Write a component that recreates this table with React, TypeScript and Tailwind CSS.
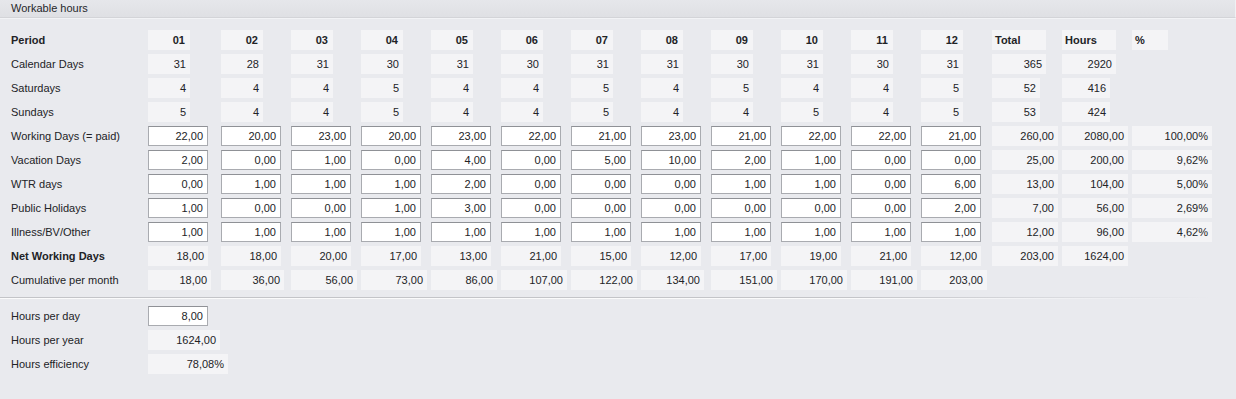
import type { ReactNode } from 'react';

type Cell =
  | { kind: 'head'; text: string; w: number; align?: 'left' | 'right' }
  | { kind: 'ro'; text: string; w: number }
  | { kind: 'input'; text: string; w: number }
  | null;

// width of each slot after the label column (12 months, Total, Hours, %)
const SLOTS = [73, 70, 70, 70, 70, 70, 70, 70, 70, 70, 70, 71, 70, 70, 104];

const fmt = (n: number) => n.toFixed(2).replace('.', ',');

const months = ['01', '02', '03', '04', '05', '06', '07', '08', '09', '10', '11', '12'];
const calendar = [31, 28, 31, 30, 31, 30, 31, 31, 30, 31, 30, 31];
const saturdays = [4, 4, 4, 5, 4, 4, 5, 4, 5, 4, 4, 5];
const sundays = [5, 4, 4, 5, 4, 4, 5, 4, 4, 5, 4, 5];
const working = [22, 20, 23, 20, 23, 22, 21, 23, 21, 22, 22, 21];
const vacation = [2, 0, 1, 0, 4, 0, 5, 10, 2, 1, 0, 0];
const wtr = [0, 1, 1, 1, 2, 0, 0, 0, 1, 1, 0, 6];
const publicHolidays = [1, 0, 0, 1, 3, 0, 0, 0, 0, 0, 0, 2];
const illness = [1, 1, 1, 1, 1, 1, 1, 1, 1, 1, 1, 1];
const net = [18, 18, 20, 17, 13, 21, 15, 12, 17, 19, 21, 12];
const cumulative = [18, 36, 56, 73, 86, 107, 122, 134, 151, 170, 191, 203];
const cumulativeW = [63, 63, 66, 66, 66, 66, 66, 63, 66, 66, 66, 66];

const CellBox = ({ cell }: { cell: Cell }) => {
  if (!cell) return null;
  if (cell.kind === 'input') {
    return (
      <div
        className="h-[20px] bg-white border border-[#a9abb0] border-t-[#8f9196] pr-[4px] text-right leading-[18px]"
        style={{ width: cell.w }}
      >
        {cell.text}
      </div>
    );
  }
  if (cell.kind === 'head') {
    return (
      <div
        className={`h-[20px] bg-[#f4f4f6] font-bold leading-[20px] ${
          cell.align === 'left' ? 'pl-[3px] text-left' : 'pr-[5px] text-right'
        }`}
        style={{ width: cell.w }}
      >
        {cell.text}
      </div>
    );
  }
  return (
    <div
      className="h-[20px] bg-[#f4f4f6] pr-[4px] text-right leading-[20px]"
      style={{ width: cell.w }}
    >
      {cell.text}
    </div>
  );
};

const Row = ({ label, bold, cells }: { label: ReactNode; bold?: boolean; cells: Cell[] }) => (
  <div className="flex h-[20px] items-center">
    <div className={`w-[148px] shrink-0 pl-[11px] ${bold ? 'font-bold' : ''}`}>{label}</div>
    {SLOTS.map((w, i) => (
      <div key={i} className="shrink-0" style={{ width: w }}>
        <CellBox cell={cells[i] ?? null} />
      </div>
    ))}
  </div>
);

const ro = (text: string | number, w: number): Cell => ({ kind: 'ro', text: String(text), w });
const inp = (text: string, w = 60): Cell => ({ kind: 'input', text, w });

const inputRow = (values: number[], total: number, pct: string): Cell[] => [
  ...values.map((v) => inp(fmt(v))),
  ro(fmt(total), 66),
  ro(fmt(total * 8), 66),
  ro(pct, 80),
];

export default function App() {
  return (
    <div className="w-[1236px] h-[399px] overflow-hidden bg-[#e9eaee] font-['Liberation_Sans',Arial,sans-serif] text-[11px] text-[#222326]">
      <div className="h-[18px] border-b border-r border-b-[#d3d4d8] border-r-[#f0f1f4] bg-gradient-to-b from-[#e6e7eb] to-[#dfe0e4] pl-[11px] leading-[17px] text-[#26272b]">
        Workable hours
      </div>
      <div className="h-px bg-[#f2f3f6]" />

      <div className="flex flex-col gap-1 pt-[11px]">
        <Row
          label="Period"
          bold
          cells={[
            ...months.map((m) => ({ kind: 'head', text: m, w: 42 }) as Cell),
            { kind: 'head', text: 'Total', w: 54, align: 'left' },
            { kind: 'head', text: 'Hours', w: 54, align: 'left' },
            { kind: 'head', text: '%', w: 36, align: 'left' },
          ]}
        />
        <Row label="Calendar Days" cells={[...calendar.map((v) => ro(v, 42)), ro(365, 54), ro(2920, 54)]} />
        <Row label="Saturdays" cells={[...saturdays.map((v) => ro(v, 42)), ro(52, 48), ro(416, 48)]} />
        <Row label="Sundays" cells={[...sundays.map((v) => ro(v, 42)), ro(53, 48), ro(424, 48)]} />
        <Row label="Working Days (= paid)" cells={inputRow(working, 260, '100,00%')} />
        <Row label="Vacation Days" cells={inputRow(vacation, 25, '9,62%')} />
        <Row label="WTR days" cells={inputRow(wtr, 13, '5,00%')} />
        <Row label="Public Holidays" cells={inputRow(publicHolidays, 7, '2,69%')} />
        <Row label="Illness/BV/Other" cells={inputRow(illness, 12, '4,62%')} />
        <Row
          label="Net Working Days"
          bold
          cells={[...net.map((v) => ro(fmt(v), 60)), ro(fmt(203), 66), ro(fmt(1624), 66)]}
        />
        <Row
          label="Cumulative per month"
          cells={cumulative.map((v, i) => ({ kind: 'ro', text: fmt(v), w: cumulativeW[i] }) as Cell)}
        />
      </div>

      <div className="mt-[7px] w-[1212px]">
        <div className="h-px bg-gradient-to-r from-[#c3c4c8] via-[#c3c4c8] via-70% to-transparent" />
        <div className="h-px bg-gradient-to-r from-white via-white via-70% to-transparent opacity-80" />
      </div>

      <div className="flex flex-col gap-1 pt-[7px]">
        <Row label="Hours per day" cells={[inp('8,00')]} />
        <Row label="Hours per year" cells={[ro('1624,00', 72)]} />
        <Row label="Hours efficiency" cells={[ro('78,08%', 80)]} />
      </div>
    </div>
  );
}
